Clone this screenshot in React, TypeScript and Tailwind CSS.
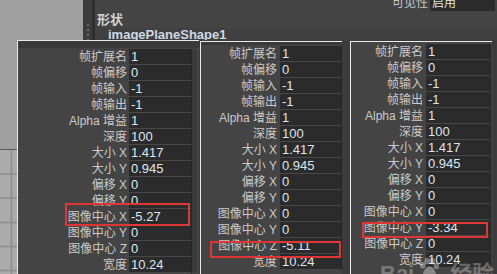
import React from 'react';

const LABELS = ['帧扩展名', '帧偏移', '帧输入', '帧输出', 'Alpha 增益', '深度', '大小 X', '大小 Y', '偏移 X', '偏移 Y', '图像中心 X', '图像中心 Y', '图像中心 Z', '宽度'];

const V1 = ['1', '0', '-1', '-1', '1', '100', '1.417', '0.945', '0', '0', '-5.27', '0', '0', '10.24'];
const V2 = ['1', '0', '-1', '-1', '1', '100', '1.417', '0.945', '0', '0', '0', '0', '-5.11', '10.24'];
const V3 = ['1', '0', '-1', '-1', '1', '100', '1.417', '0.945', '0', '0', '0', '-3.34', '0', '10.24'];

const FONT = "font-['Liberation_Sans','Noto_Sans_CJK_SC',sans-serif]";

function Row({ label, value, labelW, fieldW, tail }: { label: string; value: string; labelW: string; fieldW: string; tail: React.ReactNode }) {
  return (
    <div className="flex h-[16px]">
      <div className={`${labelW} text-right text-[12px] leading-[16px] text-[#cacaca] whitespace-nowrap`}>{label}</div>
      <div className={`${fieldW} h-[16px] bg-[#2b2b2b] border-b border-[#484848] pl-[2px] text-[13px] leading-[15px] text-[#dde5ef]`}>{value}</div>
      {tail}
    </div>
  );
}

export default function App() {
  return (
    <div className={`relative w-[497px] h-[274px] overflow-hidden bg-[#444444] flex ${FONT}`}>
      {/* viewport */}
      <div className="w-[83px] flex flex-col">
        <div className="h-[149px] bg-[#a0a0a0]" />
        <div className="h-[1px] bg-[#5c5c5c]" />
        <div className="flex-1 bg-[#ababab]">
          <svg width="83" height="124" className="block">
            <line x1="11.5" y1="0" x2="11.5" y2="124" stroke="#8d8d8d" strokeWidth="1.5" />
            <line x1="0" y1="24" x2="83" y2="24" stroke="#8d8d8d" strokeWidth="1.5" />
            <line x1="0" y1="48" x2="83" y2="48" stroke="#8d8d8d" strokeWidth="1.5" />
            <line x1="0" y1="72.5" x2="83" y2="72.5" stroke="#8d8d8d" strokeWidth="1.5" />
            <line x1="0" y1="96.5" x2="83" y2="96.5" stroke="#8d8d8d" strokeWidth="1.5" />
            <line x1="0" y1="120.5" x2="83" y2="120.5" stroke="#8d8d8d" strokeWidth="1.5" />
          </svg>
        </div>
      </div>
      {/* splitter */}
      <div className="w-[9px] bg-[#3c3c3c] flex flex-col items-center pt-[24px] gap-[3px]">
        <div className="w-[2px] h-[2px] bg-[#6a6a6a]" />
        <div className="w-[2px] h-[2px] bg-[#6a6a6a]" />
        <div className="w-[2px] h-[2px] bg-[#6a6a6a]" />
        <div className="w-[2px] h-[2px] bg-[#6a6a6a]" />
      </div>
      {/* attribute editor */}
      <div className="flex-1 flex flex-col border-l-[3px] border-[#2e2e2e] bg-[#444444]">
        <div className="h-[12px] flex justify-end pr-[2px] overflow-hidden">
          <div className="text-[12px] leading-[16px] -mt-[5px] text-[#c8c8c8] pr-[2px]">可见性</div>
          <div className="w-[65px] h-[11px] bg-[#2b2b2b] text-[12px] leading-[16px] text-[#dde5ef] pl-[2px] overflow-hidden">
            <div className="-mt-[5px]">启用</div>
          </div>
        </div>
        <div className="h-[16px] pl-[2px] font-bold text-[13px] leading-[16px] text-[#d2d2d2]">形状</div>
        <div className="h-[12px] bg-[#404040] pl-[13px] font-bold text-[13px] leading-[14px] text-[#cfd8e6]">imagePlaneShape1</div>
        <div className="flex-1 bg-[#3c3c3c]" />
      </div>

      {/* panel 1 */}
      <div className="absolute left-[17px] top-[40px] bottom-0 w-[182px] border-l border-t border-[#ececec] bg-[#444444]">
        <div className="h-[7px] bg-[#3a3a3a]" />
        <div className="h-[1px]" />
        {LABELS.map((l, i) => (
          <Row key={i} label={l} value={V1[i]} labelW="w-[111px] pr-[2px]" fieldW="w-[62px]" tail={<div className="w-[6px] border-l border-[#262626] bg-[#3b3b3b]" />} />
        ))}
      </div>

      {/* panel 2 */}
      <div className="absolute left-[200px] top-[41px] bottom-0 w-[142px] border-l border-t border-[#ececec] bg-[#444444]">
        <div className="h-[3px] bg-[#3a3a3a]" />
        <div className="h-[1px]" />
        {LABELS.map((l, i) => (
          <Row key={i} label={l} value={V2[i]} labelW="w-[79px] pr-[3px]" fieldW="w-[61px]" tail={<div className="w-[1px] bg-[#262626]" />} />
        ))}
      </div>

      {/* panel 3 */}
      <div className="absolute left-[350px] top-[41px] bottom-0 w-[142px] border-l border-t border-[#ececec] bg-[#444444]">
        <div className="h-[2px]" />
        {LABELS.map((l, i) => (
          <Row key={i} label={l} value={V3[i]} labelW="w-[75px] pr-[3px]" fieldW="w-[64px]" tail={<div className="w-[1px] bg-[#262626]" />} />
        ))}
      </div>

      {/* red highlight boxes */}
      <div className="absolute left-[65px] top-[203px] w-[125px] h-[23px] border-2 border-[#e03535]" />
      <div className="absolute left-[210px] top-[241px] w-[131px] h-[17px] border-2 border-[#e03535]" />
      <div className="absolute left-[362px] top-[222px] w-[126px] h-[16px] border-2 border-[#e03535]" />

      {/* watermark */}
      <div className="absolute left-[380px] top-[262px] flex items-start gap-[4px] text-[22px] font-bold leading-[24px] text-white/30">
        <span>Bai</span>
        <svg width="22" height="22" viewBox="0 0 24 24" className="-mt-[5px] shrink-0">
          <g fill="rgba(255,255,255,0.35)">
            <ellipse cx="5" cy="9" rx="3" ry="3.6" />
            <ellipse cx="10" cy="4.5" rx="3" ry="3.6" />
            <ellipse cx="15.5" cy="4.5" rx="3" ry="3.6" />
            <ellipse cx="20" cy="9.5" rx="3" ry="3.6" />
            <path d="M12.5 10c3 0 7 5 7 8.5 0 3-3 3.5-7 3.5s-7-.5-7-3.5C5.5 15 9.5 10 12.5 10z" />
          </g>
        </svg>
        <span className="ml-[6px]">经验</span>
      </div>
    </div>
  );
}
